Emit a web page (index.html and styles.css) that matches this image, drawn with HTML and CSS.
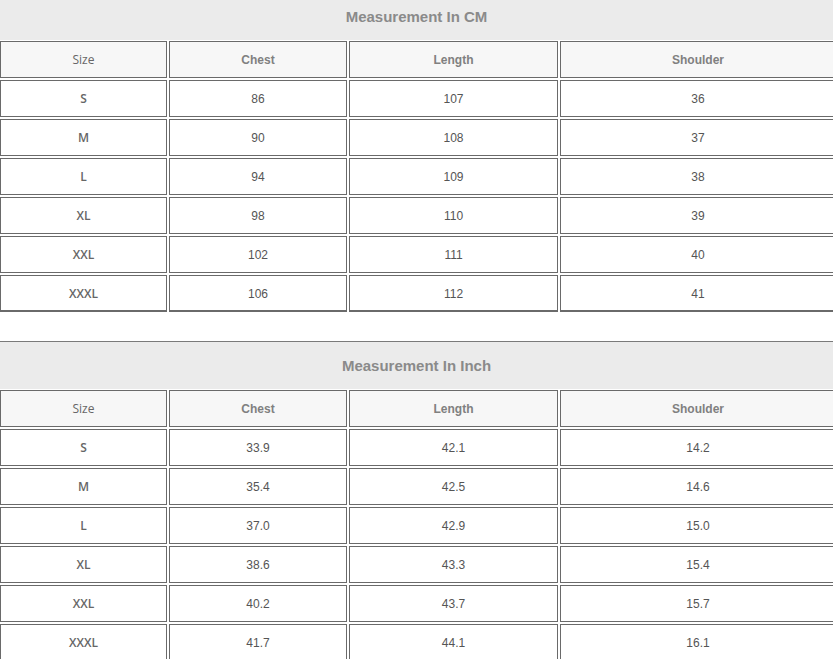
FILE: index.html
```html
<!DOCTYPE html>
<html>
<head>
<meta charset="utf-8">
<link rel="stylesheet" href="styles.css">
</head>
<body>
<div class="sheet">
  <section class="chart first">
    <div class="title">Measurement In CM</div>
    <div class="grid">
      <div class="cell head size">Size</div><div class="cell head">Chest</div><div class="cell head">Length</div><div class="cell head">Shoulder</div>
      <div class="cell size">S</div><div class="cell">86</div><div class="cell">107</div><div class="cell">36</div>
      <div class="cell size">M</div><div class="cell">90</div><div class="cell">108</div><div class="cell">37</div>
      <div class="cell size">L</div><div class="cell">94</div><div class="cell">109</div><div class="cell">38</div>
      <div class="cell size">XL</div><div class="cell">98</div><div class="cell">110</div><div class="cell">39</div>
      <div class="cell size">XXL</div><div class="cell">102</div><div class="cell">111</div><div class="cell">40</div>
      <div class="cell size last">XXXL</div><div class="cell last">106</div><div class="cell last">112</div><div class="cell last">41</div>
    </div>
  </section>
  <section class="chart">
    <div class="title">Measurement In Inch</div>
    <div class="grid">
      <div class="cell head size">Size</div><div class="cell head">Chest</div><div class="cell head">Length</div><div class="cell head">Shoulder</div>
      <div class="cell size">S</div><div class="cell">33.9</div><div class="cell">42.1</div><div class="cell">14.2</div>
      <div class="cell size">M</div><div class="cell">35.4</div><div class="cell">42.5</div><div class="cell">14.6</div>
      <div class="cell size">L</div><div class="cell">37.0</div><div class="cell">42.9</div><div class="cell">15.0</div>
      <div class="cell size">XL</div><div class="cell">38.6</div><div class="cell">43.3</div><div class="cell">15.4</div>
      <div class="cell size">XXL</div><div class="cell">40.2</div><div class="cell">43.7</div><div class="cell">15.7</div>
      <div class="cell size last">XXXL</div><div class="cell last">41.7</div><div class="cell last">44.1</div><div class="cell last">16.1</div>
    </div>
  </section>
</div>
</body>
</html>
```
FILE: styles.css
```css
html, body {
  margin: 0;
  padding: 0;
  background: #ffffff;
  overflow: hidden;
}
body {
  font-family: "Liberation Sans", Arial, sans-serif;
  font-size: 12px;
  color: #555555;
}
.sheet {
  width: 833px;
  overflow: hidden;
  display: flex;
  flex-direction: column;
  gap: 29px;
  margin-top: -8px;
}
.chart {
  width: 836px;
  display: flex;
  flex-direction: column;
  gap: 1px;
}
.title {
  width: 833px;
  height: 48px;
  box-sizing: border-box;
  border-top: 1px solid #7a7a7a;
  background: #ebebeb;
  display: flex;
  align-items: center;
  justify-content: center;
  padding-bottom: 1px;
  font-weight: bold;
  font-size: 15px;
  color: #8a8a8a;
}
.first .title {
  border-top-color: #dedaf0;
}
.grid {
  display: grid;
  grid-template-columns: 167px 178px 209px 276px;
  grid-auto-rows: 37px;
  gap: 2px;
}
.cell {
  box-sizing: border-box;
  border: 1px solid #6a6a6a;
  background: #ffffff;
  display: flex;
  align-items: center;
  justify-content: center;
}
.cell.head {
  background: #f7f7f7;
  font-weight: bold;
  color: #808080;
}
.cell.size {
  font-family: "Open Sans", "Liberation Sans", sans-serif;
  font-weight: 600;
  color: #666666;
}
.cell.head.size {
  font-weight: 500;
  color: #666666;
}
.cell.last {
  border-bottom-width: 2px;
  padding-top: 1px;
}
```
